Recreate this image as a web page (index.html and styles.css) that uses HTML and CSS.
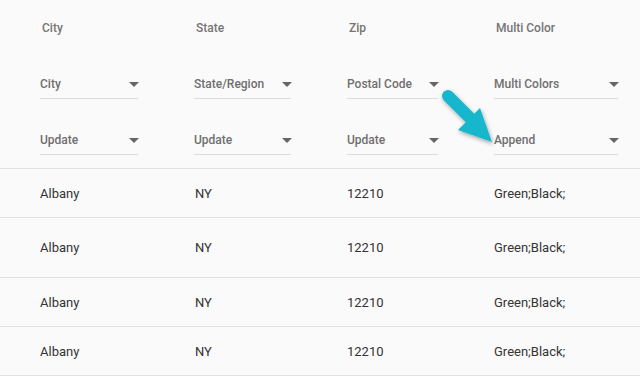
FILE: index.html
```html
<!DOCTYPE html>
<html>
	<head>
		<meta charset="utf-8">
		<title>Grid</title>
		<link rel="stylesheet" href="styles.css">
	</head>
	<body>
		<div id="grid">
			<!--表头-->
			<div class="head">
				<div class="col">
					<div class="title">City</div>
					<div class="select"><span>City</span><i class="caret"></i></div>
					<div class="select"><span>Update</span><i class="caret"></i></div>
				</div>
				<div class="col">
					<div class="title">State</div>
					<div class="select"><span>State/Region</span><i class="caret"></i></div>
					<div class="select"><span>Update</span><i class="caret"></i></div>
				</div>
				<div class="col">
					<div class="title">Zip</div>
					<div class="select"><span>Postal Code</span><i class="caret"></i></div>
					<div class="select"><span>Update</span><i class="caret"></i></div>
				</div>
				<div class="col last">
					<div class="title">Multi Color</div>
					<div class="select"><span>Multi Colors</span><i class="caret"></i></div>
					<div class="select"><span>Append</span><i class="caret"></i></div>
				</div>
			</div>

			<!--数据-->
			<div class="row">
				<div>Albany</div><div>NY</div><div>12210</div><div>Green;Black;</div>
			</div>
			<div class="row tall">
				<div>Albany</div><div>NY</div><div>12210</div><div>Green;Black;</div>
			</div>
			<div class="row">
				<div>Albany</div><div>NY</div><div>12210</div><div>Green;Black;</div>
			</div>
			<div class="row">
				<div>Albany</div><div>NY</div><div>12210</div><div>Green;Black;</div>
			</div>

			<!--箭头-->
			<svg class="arrow" width="70" height="70" viewBox="0 0 70 70">
				<defs>
					<filter id="sh" x="-30%" y="-30%" width="160%" height="160%">
						<feDropShadow dx="1" dy="2" stdDeviation="2" flood-color="#000" flood-opacity="0.35"/>
					</filter>
				</defs>
				<g filter="url(#sh)" fill="#19b6cc">
					<line x1="11" y1="12" x2="36" y2="37" stroke="#19b6cc" stroke-width="12" stroke-linecap="round"/>
					<polygon points="21,46 43,24 55,58"/>
				</g>
			</svg>
		</div>
	</body>
</html>
```

FILE: styles.css
```css
* {
	margin: 0;
	padding: 0;
}

body {
	background: #fff;
	font-family: Roboto, "Liberation Sans", sans-serif;
}

#grid {
	position: relative;
	background: #fafafa;
}

#grid .head {
	display: grid;
	grid-template-columns: 154px 153px 147px 1fr;
	padding: 18px 0 13px 40px;
	border-bottom: 1px solid #e0e0e0;
}

#grid .title {
	padding-left: 2px;
	height: 20px;
	line-height: 20px;
	font-size: 12px;
	font-weight: 500;
	color: #757575;
	margin-bottom: 36px;
}

#grid .select {
	display: flex;
	align-items: center;
	justify-content: space-between;
	width: 98px;
	height: 20px;
	padding-bottom: 4px;
	border-bottom: 1px solid #dcdcdc;
	font-size: 12px;
	font-weight: 500;
	color: #6f6f6f;
}

#grid .select + .select {
	margin-top: 31px;
}

#grid .col:nth-child(2) .select {
	width: 97px;
}

#grid .col:nth-child(3) .select {
	width: 91px;
}

#grid .col.last .select {
	width: 124px;
}

#grid .caret {
	width: 0;
	height: 0;
	border-left: 5px solid transparent;
	border-right: 5px solid transparent;
	border-top: 5px solid #666;
	margin-right: -1px;
}

#grid .row {
	display: grid;
	grid-template-columns: 155px 152px 147px 1fr;
	align-items: center;
	height: 48px;
	padding-left: 40px;
	border-bottom: 1px solid #e0e0e0;
	font-size: 13px;
	color: #333;
}

#grid .row.tall {
	height: 59px;
}

#grid .arrow {
	position: absolute;
	left: 437px;
	top: 84px;
}
```
